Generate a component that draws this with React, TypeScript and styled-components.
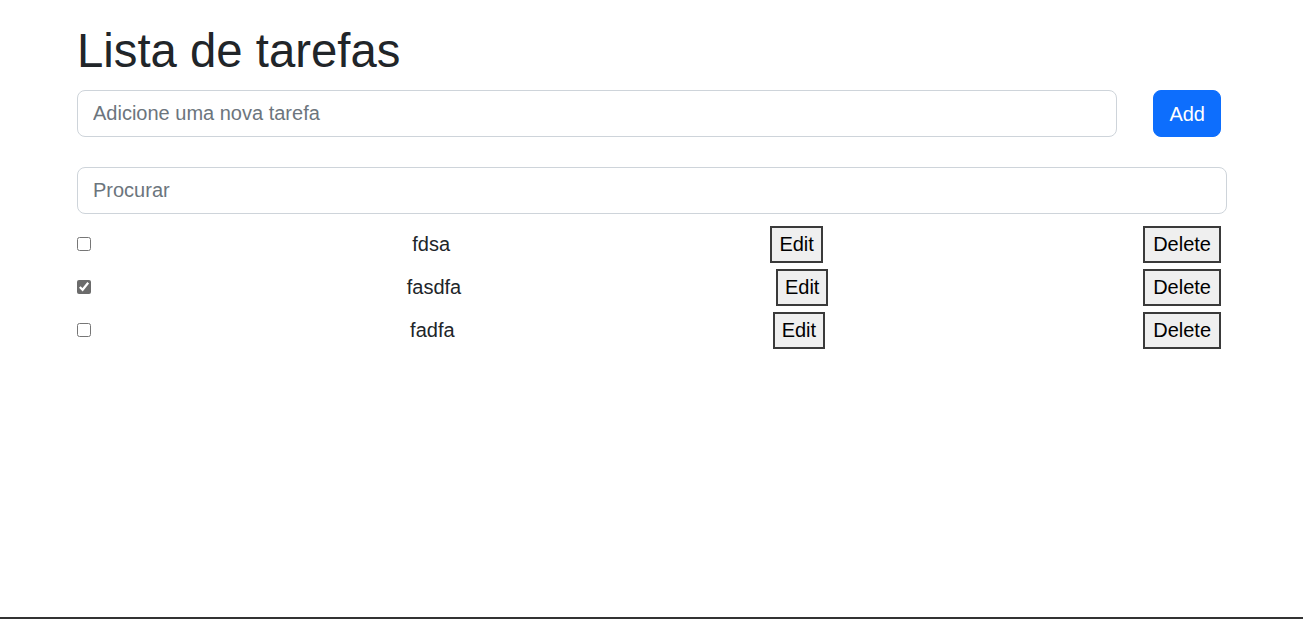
import React from "react";
import styled, { createGlobalStyle } from "styled-components";

const Global = createGlobalStyle`
  * { box-sizing: border-box; }
  html, body { margin: 0; }
  body {
    font-family: "Liberation Sans", Arial, sans-serif;
    color: #212529;
    background: #fff;
    line-height: 1.5;
  }
`;

const Page = styled.div`
  height: 619px;
  overflow: hidden;
  border-bottom: 2px solid #333;
  padding: 0 76px 0 77px;
`;

const Title = styled.h1`
  margin: 23px 0 10px;
  font-size: 47.3px;
  font-weight: 400;
  line-height: 1.2;
`;

const AddRow = styled.div`
  display: flex;
  align-items: center;
  gap: 36px;
  padding-right: 6px;
`;

const TextInput = styled.input`
  flex: 1;
  display: block;
  width: 100%;
  height: 47px;
  padding: 8px 15px;
  font-family: inherit;
  font-size: 20px;
  line-height: 1.5;
  color: #212529;
  background: #fff;
  border: 1px solid #ced4da;
  border-radius: 8px;
  outline: none;
  &::placeholder { color: #6c757d; }
`;

const SearchWrap = styled.div`
  margin-top: 30px;
  display: flex;
`;

const AddButton = styled.button`
  height: 47px;
  padding: 8px 15px;
  font-family: inherit;
  font-size: 20px;
  line-height: 1.5;
  color: #fff;
  background: #0d6efd;
  border: 1px solid #0d6efd;
  border-radius: 8px;
`;

const List = styled.div`
  margin-top: 12px;
  display: flex;
  flex-direction: column;
  gap: 6px;
`;

const Row = styled.div`
  display: flex;
  justify-content: space-between;
  align-items: center;
  padding-right: 6px;
  height: 37px;
`;

const Check = styled.input`
  width: 14px;
  height: 14px;
  margin: 0 1px 0 0;
  accent-color: #6b6b6b;
`;

const TaskText = styled.span`
  font-size: 20px;
`;

const PlainButton = styled.button<{ $wide?: boolean }>`
  height: 37px;
  padding: ${(p) => (p.$wide ? "1px 8px" : "1px 7px")};
  font-family: inherit;
  font-size: 20px;
  line-height: 1.5;
  color: #000;
  background: #efefef;
  border: 2px solid #3a3a3a;
  border-radius: 0;
`;

const tasks = [
  { text: "fdsa", done: false },
  { text: "fasdfa", done: true },
  { text: "fadfa", done: false },
];

export default function App() {
  return (
    <>
      <Global />
      <Page>
        <Title>Lista de tarefas</Title>
        <AddRow>
          <TextInput placeholder="Adicione uma nova tarefa" />
          <AddButton>Add</AddButton>
        </AddRow>
        <SearchWrap>
          <TextInput placeholder="Procurar" />
        </SearchWrap>
        <List>
          {tasks.map((t) => (
            <Row key={t.text}>
              <Check type="checkbox" defaultChecked={t.done} />
              <TaskText>{t.text}</TaskText>
              <PlainButton>Edit</PlainButton>
              <PlainButton $wide>Delete</PlainButton>
            </Row>
          ))}
        </List>
      </Page>
    </>
  );
}
